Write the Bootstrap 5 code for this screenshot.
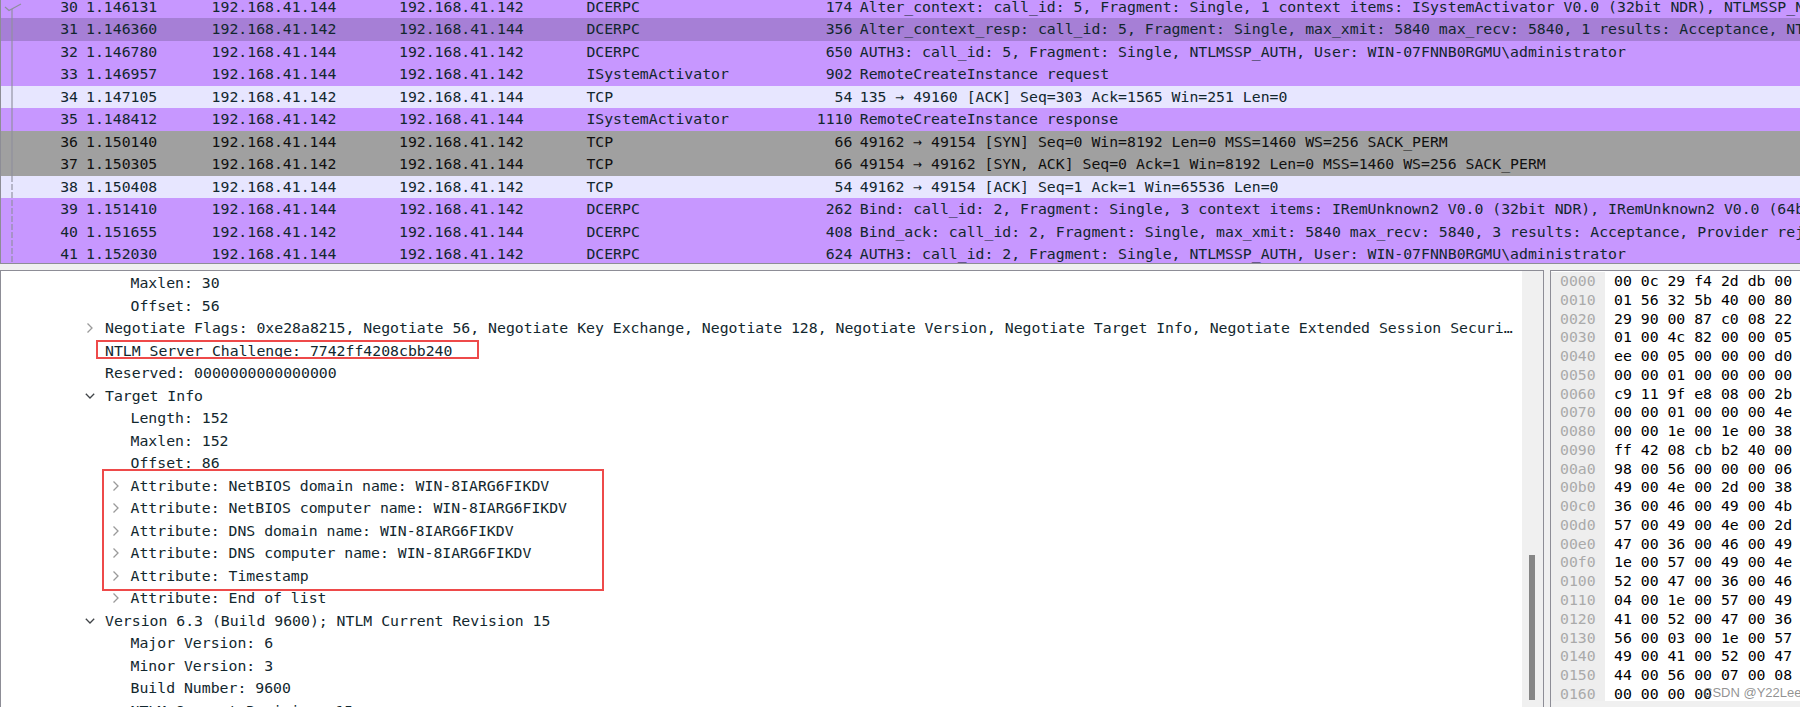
<!DOCTYPE html>
<html lang="en">
<head>
<meta charset="utf-8">
<title>Wireshark capture</title>
<link href="https://cdn.jsdelivr.net/npm/bootstrap@5.3.0/dist/css/bootstrap.min.css" rel="stylesheet">
<style>
html,body{height:707px;overflow:hidden;background:#f0f0f0}
body{font-family:"DejaVu Sans Mono","Liberation Mono",monospace;font-size:14.8px;line-height:22.5px;color:#12272e}
.shark-shell{height:707px;position:relative}
.pkt-pane{height:264px;border-left:1px solid #8d8d96;border-bottom:1px solid #8d8d96;overflow:hidden;position:relative;flex:none}
.pkt-list{margin-top:-4.5px}
.pkt-row{height:22.5px;line-height:21px;white-space:pre}
.pkt-dcerpc{background:#c797ff}
.pkt-hover{background:#a67fd6}
.pkt-tcp{background:#e7e6ff}
.pkt-syn{background:#a0a0a0;color:#101010}
.c-no{width:77px;text-align:right;flex:none}
.c-time{width:125.6px;margin-left:8px;flex:none}
.c-src,.c-dst{width:187.4px;flex:none}
.c-proto{width:209px;flex:none}
.c-len{width:57px;text-align:right;flex:none}
.c-info{margin-left:7.4px;flex:none}
.conv-line{position:absolute;left:0;top:0;pointer-events:none}
.lower{margin-top:6px;height:437px;flex:none}
.tree-pane{width:1544px;border-top:1px solid #8d8d96;border-left:1px solid #8d8d96;border-right:1px solid #8d8d96;background:#fff;flex:none;overflow:hidden}
.tree-body{width:1521px;padding-top:1px;overflow:hidden;flex:none}
.tree-row{height:22.5px;white-space:pre;display:flex;align-items:center}
.lv1{padding-left:104px}
.lv2{padding-left:129.5px}
.tw{width:0;overflow:visible;flex:none;display:block}
.tw svg{display:block;transform:translateX(-20px)}
.scroll-track{width:21px;background:#f0f0f0;flex:none;position:relative}
.scroll-thumb{position:absolute;left:7px;width:6px;top:284px;height:145px;background:#868686}
.hex-pane{margin-left:6px;flex:1 1 auto;border-top:1px solid #8d8d96;border-left:1px solid #8d8d96;overflow:hidden;position:relative}
.hex-body{height:430px;background:#fff;overflow:hidden;padding-top:1px}
.hex-row{height:18.77px;line-height:18.77px;white-space:pre;display:flex;color:#000}
.hex-off{width:54px;background:#eee;color:#aaa;padding-left:9px;flex:none}
.hex-data{margin-left:9px}
.mark-red{position:absolute;border:2px solid #ee4a4a;pointer-events:none}
.mark-a{left:96px;top:340px;width:383px;height:19px}
.mark-b{left:102px;top:469px;width:502px;height:122px}
.wm{position:absolute;left:1703px;top:684px;font-family:"Liberation Sans",sans-serif;font-size:13px;line-height:18px;color:rgba(110,110,110,.75);white-space:nowrap}
</style>
</head>
<body>
<svg width="0" height="0" class="position-absolute">
<symbol id="tw-r" viewBox="0 0 10 12"><path d="M2.500 1.500 7 6 2.500 10.500" fill="none" stroke="#9a9a9a" stroke-width="1.3"/></symbol>
<symbol id="tw-d" viewBox="0 0 10 12"><path d="M.8 3.800 5 8 9.200 3.800" fill="none" stroke="#404448" stroke-width="1.3"/></symbol>
</svg>
<div class="shark-shell d-flex flex-column">
<div class="pkt-pane">
<div class="pkt-list">
<div class="d-flex pkt-row pkt-dcerpc"><span class="c-no">30</span><span class="c-time">1.146131</span><span class="c-src">192.168.41.144</span><span class="c-dst">192.168.41.142</span><span class="c-proto">DCERPC</span><span class="c-len">174</span><span class="c-info">Alter_context: call_id: 5, Fragment: Single, 1 context items: ISystemActivator V0.0 (32bit NDR), NTLMSSP_NEGOTIATE</span></div>
<div class="d-flex pkt-row pkt-hover"><span class="c-no">31</span><span class="c-time">1.146360</span><span class="c-src">192.168.41.142</span><span class="c-dst">192.168.41.144</span><span class="c-proto">DCERPC</span><span class="c-len">356</span><span class="c-info">Alter_context_resp: call_id: 5, Fragment: Single, max_xmit: 5840 max_recv: 5840, 1 results: Acceptance, NTLMSSP_CHALLENGE</span></div>
<div class="d-flex pkt-row pkt-dcerpc"><span class="c-no">32</span><span class="c-time">1.146780</span><span class="c-src">192.168.41.144</span><span class="c-dst">192.168.41.142</span><span class="c-proto">DCERPC</span><span class="c-len">650</span><span class="c-info">AUTH3: call_id: 5, Fragment: Single, NTLMSSP_AUTH, User: WIN-07FNNB0RGMU\administrator</span></div>
<div class="d-flex pkt-row pkt-dcerpc"><span class="c-no">33</span><span class="c-time">1.146957</span><span class="c-src">192.168.41.144</span><span class="c-dst">192.168.41.142</span><span class="c-proto">ISystemActivator</span><span class="c-len">902</span><span class="c-info">RemoteCreateInstance request</span></div>
<div class="d-flex pkt-row pkt-tcp"><span class="c-no">34</span><span class="c-time">1.147105</span><span class="c-src">192.168.41.142</span><span class="c-dst">192.168.41.144</span><span class="c-proto">TCP</span><span class="c-len">54</span><span class="c-info">135 → 49160 [ACK] Seq=303 Ack=1565 Win=251 Len=0</span></div>
<div class="d-flex pkt-row pkt-dcerpc"><span class="c-no">35</span><span class="c-time">1.148412</span><span class="c-src">192.168.41.142</span><span class="c-dst">192.168.41.144</span><span class="c-proto">ISystemActivator</span><span class="c-len">1110</span><span class="c-info">RemoteCreateInstance response</span></div>
<div class="d-flex pkt-row pkt-syn"><span class="c-no">36</span><span class="c-time">1.150140</span><span class="c-src">192.168.41.144</span><span class="c-dst">192.168.41.142</span><span class="c-proto">TCP</span><span class="c-len">66</span><span class="c-info">49162 → 49154 [SYN] Seq=0 Win=8192 Len=0 MSS=1460 WS=256 SACK_PERM</span></div>
<div class="d-flex pkt-row pkt-syn"><span class="c-no">37</span><span class="c-time">1.150305</span><span class="c-src">192.168.41.142</span><span class="c-dst">192.168.41.144</span><span class="c-proto">TCP</span><span class="c-len">66</span><span class="c-info">49154 → 49162 [SYN, ACK] Seq=0 Ack=1 Win=8192 Len=0 MSS=1460 WS=256 SACK_PERM</span></div>
<div class="d-flex pkt-row pkt-tcp"><span class="c-no">38</span><span class="c-time">1.150408</span><span class="c-src">192.168.41.144</span><span class="c-dst">192.168.41.142</span><span class="c-proto">TCP</span><span class="c-len">54</span><span class="c-info">49162 → 49154 [ACK] Seq=1 Ack=1 Win=65536 Len=0</span></div>
<div class="d-flex pkt-row pkt-dcerpc"><span class="c-no">39</span><span class="c-time">1.151410</span><span class="c-src">192.168.41.144</span><span class="c-dst">192.168.41.142</span><span class="c-proto">DCERPC</span><span class="c-len">262</span><span class="c-info">Bind: call_id: 2, Fragment: Single, 3 context items: IRemUnknown2 V0.0 (32bit NDR), IRemUnknown2 V0.0 (64bit NDR)</span></div>
<div class="d-flex pkt-row pkt-dcerpc"><span class="c-no">40</span><span class="c-time">1.151655</span><span class="c-src">192.168.41.142</span><span class="c-dst">192.168.41.144</span><span class="c-proto">DCERPC</span><span class="c-len">408</span><span class="c-info">Bind_ack: call_id: 2, Fragment: Single, max_xmit: 5840 max_recv: 5840, 3 results: Acceptance, Provider rejection</span></div>
<div class="d-flex pkt-row pkt-dcerpc"><span class="c-no">41</span><span class="c-time">1.152030</span><span class="c-src">192.168.41.144</span><span class="c-dst">192.168.41.142</span><span class="c-proto">DCERPC</span><span class="c-len">624</span><span class="c-info">AUTH3: call_id: 2, Fragment: Single, NTLMSSP_AUTH, User: WIN-07FNNB0RGMU\administrator</span></div>
</div>
<svg class="conv-line" width="30" height="263">
<path d="M11 9V176" stroke="#8f8f9e" stroke-opacity=".75" stroke-width="1.5" fill="none"/>
<path d="M11 176V263" stroke="#8f8f9e" stroke-opacity=".75" stroke-width="1.5" stroke-dasharray="6 2" fill="none"/>
<path d="M4 7 8 10.500 20 4" stroke="#8f8f9e" stroke-width="1.2" fill="none"/>
</svg>
</div>
<div class="lower d-flex">
<div class="tree-pane d-flex">
<div class="tree-body">
<div class="tree-row lv2">Maxlen: 30</div>
<div class="tree-row lv2">Offset: 56</div>
<div class="tree-row lv1"><span class="tw"><svg width="10" height="12"><use href="#tw-r"/></svg></span>Negotiate Flags: 0xe28a8215, Negotiate 56, Negotiate Key Exchange, Negotiate 128, Negotiate Version, Negotiate Target Info, Negotiate Extended Session Securi…</div>
<div class="tree-row lv1">NTLM Server Challenge: 7742ff4208cbb240</div>
<div class="tree-row lv1">Reserved: 0000000000000000</div>
<div class="tree-row lv1"><span class="tw"><svg width="10" height="12"><use href="#tw-d"/></svg></span>Target Info</div>
<div class="tree-row lv2">Length: 152</div>
<div class="tree-row lv2">Maxlen: 152</div>
<div class="tree-row lv2">Offset: 86</div>
<div class="tree-row lv2"><span class="tw"><svg width="10" height="12"><use href="#tw-r"/></svg></span>Attribute: NetBIOS domain name: WIN-8IARG6FIKDV</div>
<div class="tree-row lv2"><span class="tw"><svg width="10" height="12"><use href="#tw-r"/></svg></span>Attribute: NetBIOS computer name: WIN-8IARG6FIKDV</div>
<div class="tree-row lv2"><span class="tw"><svg width="10" height="12"><use href="#tw-r"/></svg></span>Attribute: DNS domain name: WIN-8IARG6FIKDV</div>
<div class="tree-row lv2"><span class="tw"><svg width="10" height="12"><use href="#tw-r"/></svg></span>Attribute: DNS computer name: WIN-8IARG6FIKDV</div>
<div class="tree-row lv2"><span class="tw"><svg width="10" height="12"><use href="#tw-r"/></svg></span>Attribute: Timestamp</div>
<div class="tree-row lv2"><span class="tw"><svg width="10" height="12"><use href="#tw-r"/></svg></span>Attribute: End of list</div>
<div class="tree-row lv1"><span class="tw"><svg width="10" height="12"><use href="#tw-d"/></svg></span>Version 6.3 (Build 9600); NTLM Current Revision 15</div>
<div class="tree-row lv2">Major Version: 6</div>
<div class="tree-row lv2">Minor Version: 3</div>
<div class="tree-row lv2">Build Number: 9600</div>
<div class="tree-row lv2">NTLM Current Revision: 15</div>
</div>
<div class="scroll-track"><div class="scroll-thumb"></div></div>
</div>
<div class="hex-pane">
<div class="hex-body">
<div class="hex-row"><span class="hex-off">0000</span><span class="hex-data">00 0c 29 f4 2d db 00</span></div>
<div class="hex-row"><span class="hex-off">0010</span><span class="hex-data">01 56 32 5b 40 00 80</span></div>
<div class="hex-row"><span class="hex-off">0020</span><span class="hex-data">29 90 00 87 c0 08 22</span></div>
<div class="hex-row"><span class="hex-off">0030</span><span class="hex-data">01 00 4c 82 00 00 05</span></div>
<div class="hex-row"><span class="hex-off">0040</span><span class="hex-data">ee 00 05 00 00 00 d0</span></div>
<div class="hex-row"><span class="hex-off">0050</span><span class="hex-data">00 00 01 00 00 00 00</span></div>
<div class="hex-row"><span class="hex-off">0060</span><span class="hex-data">c9 11 9f e8 08 00 2b</span></div>
<div class="hex-row"><span class="hex-off">0070</span><span class="hex-data">00 00 01 00 00 00 4e</span></div>
<div class="hex-row"><span class="hex-off">0080</span><span class="hex-data">00 00 1e 00 1e 00 38</span></div>
<div class="hex-row"><span class="hex-off">0090</span><span class="hex-data">ff 42 08 cb b2 40 00</span></div>
<div class="hex-row"><span class="hex-off">00a0</span><span class="hex-data">98 00 56 00 00 00 06</span></div>
<div class="hex-row"><span class="hex-off">00b0</span><span class="hex-data">49 00 4e 00 2d 00 38</span></div>
<div class="hex-row"><span class="hex-off">00c0</span><span class="hex-data">36 00 46 00 49 00 4b</span></div>
<div class="hex-row"><span class="hex-off">00d0</span><span class="hex-data">57 00 49 00 4e 00 2d</span></div>
<div class="hex-row"><span class="hex-off">00e0</span><span class="hex-data">47 00 36 00 46 00 49</span></div>
<div class="hex-row"><span class="hex-off">00f0</span><span class="hex-data">1e 00 57 00 49 00 4e</span></div>
<div class="hex-row"><span class="hex-off">0100</span><span class="hex-data">52 00 47 00 36 00 46</span></div>
<div class="hex-row"><span class="hex-off">0110</span><span class="hex-data">04 00 1e 00 57 00 49</span></div>
<div class="hex-row"><span class="hex-off">0120</span><span class="hex-data">41 00 52 00 47 00 36</span></div>
<div class="hex-row"><span class="hex-off">0130</span><span class="hex-data">56 00 03 00 1e 00 57</span></div>
<div class="hex-row"><span class="hex-off">0140</span><span class="hex-data">49 00 41 00 52 00 47</span></div>
<div class="hex-row"><span class="hex-off">0150</span><span class="hex-data">44 00 56 00 07 00 08</span></div>
<div class="hex-row"><span class="hex-off">0160</span><span class="hex-data">00 00 00 00</span></div>
</div>
</div>
</div>
<div class="mark-red mark-a"></div>
<div class="mark-red mark-b"></div>
<div class="wm">CSDN @Y22Lee</div>
</div>
<script src="https://cdn.jsdelivr.net/npm/bootstrap@5.3.0/dist/js/bootstrap.bundle.min.js"></script>
</body>
</html>
